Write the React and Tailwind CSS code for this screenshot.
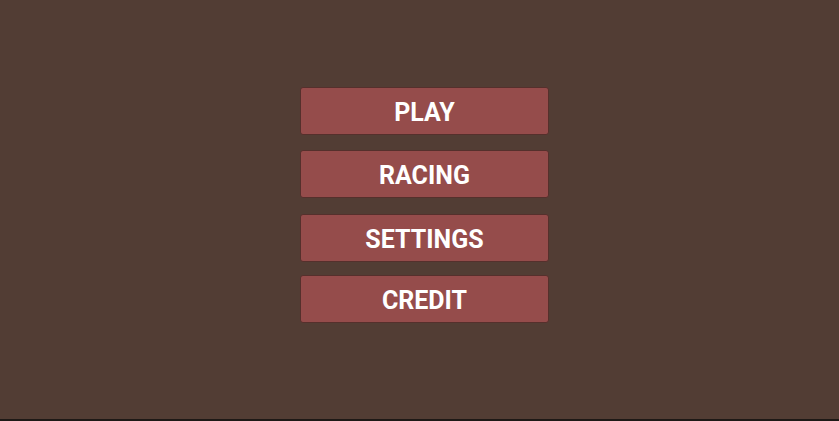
export default function App() {
  const items = [
    { label: "PLAY", mt: "mt-0" },
    { label: "RACING", mt: "mt-[15px]" },
    { label: "SETTINGS", mt: "mt-[16px]" },
    { label: "CREDIT", mt: "mt-[13px]" },
  ];

  return (
    <main className="flex h-[421px] w-[839px] flex-col bg-[#523d34] font-['Roboto',sans-serif]">
      <div className="flex flex-1 flex-col pl-[300px] pt-[87px]">
        {items.map((item) => (
          <button
            key={item.label}
            className={`${item.mt} flex h-[48px] w-[249px] items-center justify-center rounded-[3px] border border-[#55302c] bg-[#954c4b] pt-[4px] text-[25px] font-bold text-white`}
          >
            {item.label}
          </button>
        ))}
      </div>
      <div className="h-[2px] bg-[#1e1916]" />
    </main>
  );
}
